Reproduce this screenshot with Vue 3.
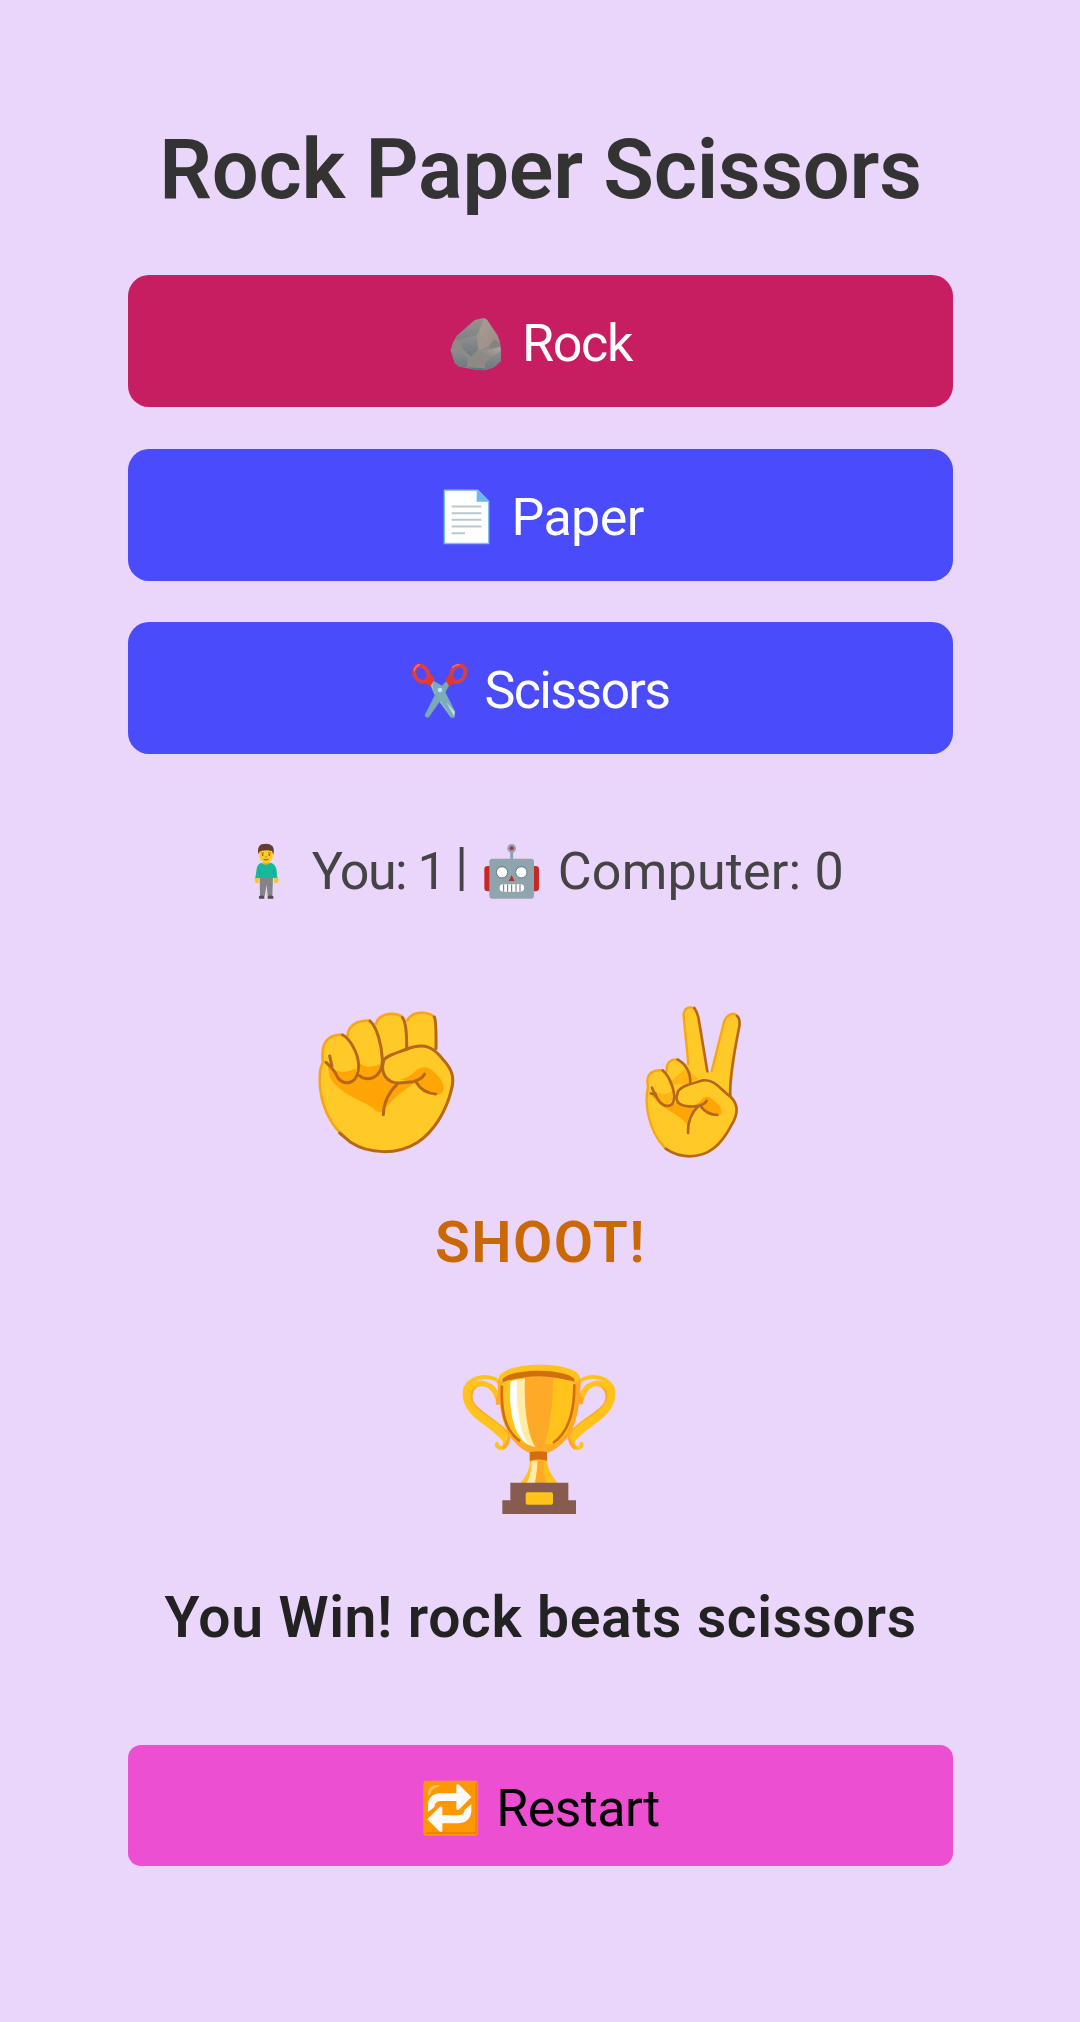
<script setup>
const restartLabel = 'Restart'
</script>

<template>
  <main class="game">
    <h1 class="title"><span>Rock Paper Scissors</span></h1>

    <div class="choices">
      <button class="choice selected">
        <svg class="rock-icon" viewBox="60 50 156 162" width="52" height="54" aria-hidden="true">
          <defs>
            <linearGradient id="rk1" x1="0" y1="0" x2="0" y2="1"><stop offset="0" stop-color="#9a918c" /><stop offset="1" stop-color="#7d8285" /></linearGradient>
            <linearGradient id="rk2" x1="0" y1="0" x2="1" y2="1"><stop offset="0" stop-color="#a89d96" /><stop offset="1" stop-color="#9b8c84" /></linearGradient>
            <linearGradient id="rk3" x1="0" y1="0" x2="0" y2="1"><stop offset="0" stop-color="#908e8c" /><stop offset="1" stop-color="#6c7a81" /></linearGradient>
            <linearGradient id="rk4" x1="1" y1="0" x2="0" y2="1"><stop offset="0" stop-color="#b2a59d" /><stop offset="1" stop-color="#80817f" /></linearGradient>
          </defs>
          <path d="M162 53 L170 57 L202 103 L210 125 L213 150 L212 182 L192 201 L164 210 L138 208 L88 199 L74 187 L62 150 L68 128 L80 107 L134 60Z" fill="#8e8b88" />
          <path d="M162 53 L149 88 L140 104 L90 119 L75 119 L84 104 L134 60Z" fill="url(#rk1)" />
          <path d="M163 54 L172 60 L204 110 L209 124 L192 118 L174 139 L166 132 L147 92Z" fill="url(#rk2)" />
          <path d="M148 92 L165 132 L174 139 L146 150 L139 122 L140 104Z" fill="#a0958e" />
          <path d="M90 117 L140 106 L145 145 L123 169 L97 144Z" fill="url(#rk3)" />
          <path d="M175 139 L193 118 L210 128 L207 139 L185 146Z" fill="#858382" />
          <path d="M147 151 L184 147 L210 139 L213 152 L182 172 L163 160Z" fill="url(#rk4)" />
          <path d="M182 172 L213 152 L212 183 L192 201 L165 209 L164 188Z" fill="url(#rk3)" />
          <path d="M62 147 L82 150 L114 174 L111 201 L88 199 L74 187Z" fill="url(#rk3)" />
          <path d="M123 170 L146 151 L181 172 L164 188 L163 209 L111 202 L114 174Z" fill="#8e8984" />
          <path d="M111 201 L163 204 L164 210 L137 208Z" fill="#607681" />
        </svg>
        <span class="rock-label">Rock</span>
      </button>

      <button class="choice">
        <svg class="paper-icon" viewBox="70 56 141 167" width="47" height="56" aria-hidden="true">
          <path d="M74 59 H174 L207 92 V219 H74Z" fill="#fff" stroke="#82bdf7" stroke-width="4" />
          <path d="M171 58 L209 94 H171Z" fill="#6cb7ed" />
          <path d="M96 108 H185 M96 128 H185 M96 148 H185 M96 168 H185 M96 188 H136" stroke="#bbc8cf" stroke-width="6" />
        </svg>
        <span class="paper-label">Paper</span>
      </button>

      <button class="choice">
        <svg class="scissors-icon" viewBox="36 66 168 171" width="56" height="57" aria-hidden="true">
          <path d="M96 119 L108 135 L120 147 L164 228 Q160 236 152 232 L105 167 L92 137Z" fill="#9bcbd9" stroke="#608998" stroke-width="2" />
          <path d="M145 117 L130 133 L112 150 L74 226 Q77 236 87 231 L127 174 L147 137Z" fill="#79a9ba" stroke="#608998" stroke-width="1" />
          <path d="M95 119 L126 137 L166 215 L163 233 L153 231 L101 153Z" fill="#80abbb" />
          <path d="M139 187 L164 216 L162 228Z" fill="#b9e6f1" />
          <ellipse cx="64" cy="101" rx="20" ry="26" transform="rotate(-30 64 101)" fill="none" stroke="#e33c3c" stroke-width="12" />
          <path d="M87 102 Q97 103 104 117 L91 139 Q80 135 76 126Z" fill="#e33b32" />
          <ellipse cx="175" cy="101" rx="20" ry="26" transform="rotate(30 175 101)" fill="none" stroke="#d3404d" stroke-width="12" />
          <path d="M153 102 Q143 103 136 120 L148 139 Q158 135 163 126Z" fill="#dc382f" />
          <path d="M43 92 Q45 79 58 74 M157 82 Q166 74 177 74" fill="none" stroke="#ff776c" stroke-width="4" stroke-linecap="round" />
          <circle cx="120" cy="150" r="7" fill="#bde7ed" />
        </svg>
        <span class="scissors-label">Scissors</span>
      </button>
    </div>

    <p class="score">
      <svg class="person-icon" viewBox="68 40 78 168" width="26" height="56" aria-hidden="true">
        <path d="M75 141 Q69 151 77 160 L85 160 L86 140Z M131 141 L132 160 L141 160 Q149 150 140 140Z" fill="#ffc51b" />
        <path d="M88 141 H128 L126 199 H112 L109 165 L103 199 H89Z" fill="#828487" />
        <path d="M86 200 Q93 195 102 200 V207 H86Z M112 200 Q121 195 129 200 V207 H112Z" fill="#504b50" />
        <path d="M98 91 H118 V108 H98Z" fill="#f5b311" />
        <path d="M93 99 Q107 111 121 99 Q136 102 139 123 L141 144 H131 L130 123 V145 H86 V123 L85 145 H75 L79 117 Q81 103 93 99Z" fill="#18b89b" />
        <path d="M130 119 V145 M86 119 V145" stroke="#079b83" stroke-width="2" />
        <ellipse cx="107" cy="75" rx="21" ry="25" fill="#ffca28" />
        <path d="M84 73 Q80 50 94 44 Q115 38 126 49 Q133 56 129 75 L125 64 Q107 59 89 65Z" fill="#653c32" />
        <path d="M92 70 H101 M113 70 H122" stroke="#744628" stroke-width="2" />
        <circle cx="97" cy="76" r="2.5" fill="#4b342c" /><circle cx="117" cy="76" r="2.5" fill="#4b342c" />
        <path d="M104 82 H110" stroke="#d58a0c" stroke-width="3" /><path d="M100 89 Q107 93 114 89" fill="none" stroke="#975322" stroke-width="3" />
      </svg>
      <span class="you-label">You: 1</span>
      <span class="divider">|</span>
      <svg class="robot-icon" viewBox="42 40 168 168" width="56" height="56" aria-hidden="true">
        <path d="M125 64 V90" stroke="#90a4ae" stroke-width="9" />
        <circle cx="125" cy="56" r="13" fill="#90a4ae" /><circle cx="125" cy="56" r="6" fill="#b52e37" />
        <rect x="43" y="109" width="25" height="76" rx="10" fill="#c62828" /><rect x="182" y="109" width="25" height="76" rx="10" fill="#c62828" />
        <rect x="58" y="87" width="134" height="120" rx="9" fill="#90a4ae" />
        <circle cx="96" cy="128" r="17" fill="#fff" stroke="#657780" stroke-width="3" /><circle cx="154" cy="128" r="17" fill="#fff" stroke="#657780" stroke-width="3" />
        <path d="M125 137 L134 154 H116Z" fill="#c62828" />
        <rect x="89" y="164" width="73" height="22" rx="10" fill="#fff" />
        <path d="M101 164 V186 M113 164 V186 M125 164 V186 M138 164 V186 M150 164 V186" stroke="#607076" stroke-width="3" />
      </svg>
      <span class="computer-label">Computer: 0</span>
    </p>

    <div class="hands">
      <svg viewBox="0 0 510 540" width="170" height="180" aria-hidden="true" fill="none" stroke-linecap="round" stroke-linejoin="round">
        <path d="M66 218 C61 160 82 134 126 134 L143 136 C144 107 172 90 210 92 L228 101 C235 72 276 62 309 80 L322 91 C334 63 380 61 402 80 L409 97 V185 C439 211 460 237 461 273 C455 349 419 405 367 450 C315 491 235 498 163 466 C90 413 49 327 61 238Z" fill="#ffca28" />
        <path d="M80 211 C90 232 107 246 114 264 C127 280 151 280 169 250 L183 263 Q215 275 244 250 Q260 281 299 281 L350 274 C315 300 283 317 250 364 Q240 369 229 364 C204 332 135 329 90 264Z" fill="#ffa505" />
        <path d="M300 269 Q328 264 353 237 Q380 223 402 246 Q435 276 431 298 Q426 318 408 313 L378 302 L352 276Z" fill="#ffa505" />
        <path d="M104 239 Q130 254 167 235 L169 254 Q143 290 114 262Z M178 219 Q205 241 239 222 L244 250 Q211 273 181 258Z" fill="#ffa505" />
        <path d="M125 433 C73 383 53 308 61 238 L69 216 C61 160 82 134 126 134 M143 136 C144 107 172 90 210 92 M228 101 C235 72 276 65 304 78 M322 91 C336 63 380 63 402 80" stroke="#f9a51a" stroke-width="8" />
        <path d="M128 135 C149 145 174 188 176 225 C177 284 132 289 114 264 C103 238 90 227 78 217 M89 198 L96 229 M210 93 C231 112 245 164 247 207 C249 268 197 276 179 257 M307 82 Q321 100 320 175 M403 81 Q409 91 408 176" stroke="#b7671a" stroke-width="9" />
        <path d="M249 217 C250 196 299 187 329 174 C376 159 401 173 427 206 C456 237 465 261 454 300 C438 365 400 427 351 458 C290 496 205 492 152 457 L119 429" stroke="#b7671a" stroke-width="9" />
        <path d="M250 216 C241 251 261 279 297 279 L340 275 Q364 269 374 252 M292 282 Q251 322 250 374 M348 276 Q368 310 407 312" stroke="#b7671a" stroke-width="9" />
      </svg>
      <svg viewBox="0 0 450 540" width="150" height="180" aria-hidden="true" fill="none" stroke-linecap="round" stroke-linejoin="round">
        <path d="M84 288 C75 256 95 238 125 241 L140 243 C138 218 151 206 173 209 L202 222 L187 76 C191 50 219 43 231 70 L264 246 L275 244 L314 88 C323 65 355 67 360 93 L331 313 C357 338 355 369 336 407 C307 467 276 499 211 499 C135 498 82 434 81 322Z" fill="#ffca28" />
        <path d="M95 309 Q116 327 125 343 Q143 353 160 335 L175 341 L222 348 L238 350 L207 379 L204 407 C175 367 133 363 97 320Z" fill="#ffa505" />
        <path d="M211 348 Q234 345 250 323 Q267 314 282 333 Q310 349 304 372 Q296 381 277 373 L245 351Z" fill="#ffa505" />
        <path d="M111 307 Q135 320 157 302 L158 330 Q139 355 119 337Z M143 281 Q158 288 175 281 Q207 286 216 279 Q208 246 204 230Z M207 240 Q222 258 236 266 L212 276Z" fill="#ffa505" opacity=".6" />
        <path d="M134 473 C83 420 73 336 84 291 C76 256 92 239 127 241 M140 243 C138 218 153 205 176 209 M205 222 L191 77 C191 52 209 49 223 55 M275 243 L313 92 C324 69 342 67 351 77" stroke="#f9a51a" stroke-width="7" />
        <path d="M128 241 C151 261 174 320 156 343 C131 359 113 332 106 310 Q100 315 93 310 M96 293 L107 319 M173 209 Q212 231 211 281 M223 54 Q233 68 236 87 L262 244 M351 78 Q361 85 358 109 C346 173 327 258 331 318" stroke="#b7671a" stroke-width="8" />
        <path d="M172 314 C172 289 213 282 249 271 C284 267 299 296 332 321 C359 347 353 376 334 406 C304 463 267 499 208 499 Q168 498 137 476" stroke="#b7671a" stroke-width="8" />
        <path d="M170 317 Q165 346 207 349 Q249 352 260 333 M235 349 Q202 379 204 429 M242 349 Q261 374 292 375" stroke="#b7671a" stroke-width="8" />
      </svg>
    </div>

    <div class="shoot"><span>SHOOT!</span></div>

    <svg class="trophy" viewBox="0 0 540 540" width="180" height="180" aria-hidden="true" fill="none">
      <path d="M153 103 C135 74 70 70 46 113 C37 151 57 183 91 209 C133 239 158 258 166 275 Q165 296 151 294 Q139 290 141 282" stroke="#ffc31c" stroke-width="12" stroke-linecap="round" />
      <path d="M146 162 C139 125 122 98 91 103 C61 110 55 145 71 165 C88 190 157 226 177 256 Q174 288 158 294" stroke="#ffa928" stroke-width="11" />
      <path d="M142 141 C130 98 83 89 61 113 C42 140 56 166 87 191 C125 219 162 237 169 264" stroke="#ffc31c" stroke-width="16" />
      <path d="M381 103 C399 74 464 70 488 113 C497 151 477 183 443 209 C401 239 376 258 368 275 Q369 296 383 294 Q397 292 394 282" stroke="#ffc31c" stroke-width="12" stroke-linecap="round" />
      <path d="M392 162 C399 125 417 100 443 103 C473 110 478 145 464 165 C446 190 376 226 357 256 Q362 288 376 294" stroke="#ffa928" stroke-width="11" />
      <path d="M395 141 C406 98 451 89 474 113 C491 140 478 166 447 191 C409 219 372 237 365 264" stroke="#ffc31c" stroke-width="16" />
      <path d="M142 92 Q157 102 156 163 L139 165 Q133 154 145 131Z M391 92 Q376 102 379 163 L399 163 Q402 145 391 131Z" fill="#ffa928" />
      <path d="M145 91 C145 211 174 280 239 309 H292 C359 283 391 218 391 91 C380 31 155 31 145 91Z" fill="#ffa928" />
      <path d="M145 85 C156 31 380 31 390 82 L382 96 Q272 55 153 97Z" fill="#ffc31c" />
      <path d="M157 88 C182 54 347 53 374 88 L371 97 Q269 60 158 97Z" fill="#d16e0e" />
      <path d="M155 104 Q159 97 175 91 Q271 73 364 92 Q378 95 377 115 C376 204 352 270 311 283 H229 C176 264 149 205 155 104Z" fill="#ffc31c" />
      <path d="M156 107 C152 191 167 242 210 274 M373 103 C374 194 352 250 309 279" stroke="#d16e0e" stroke-width="8" />
      <path d="M181 95 Q194 87 225 86 C222 202 239 273 258 291 C201 284 172 197 181 95Z" fill="#ffecaa" />
      <path d="M182 96 Q191 91 201 91 C197 205 220 270 240 287 C199 267 176 202 182 96Z" fill="#fff" />
      <path d="M225 84 Q267 79 310 84 C307 186 297 257 278 292 H257 C234 252 221 176 225 84Z" fill="#ffa928" />
      <path d="M239 307 Q265 300 291 307 V334 H239Z" fill="#d16e0e" />
      <path d="M241 332 Q265 325 290 332 Q295 367 324 400 H211 Q240 365 241 332Z" fill="#ffc31c" />
      <path d="M245 334 H264 L255 400 H230 Q245 371 245 334Z" fill="#ffecaa" />
      <path d="M262 331 H280 Q281 369 290 400 H255 Q264 362 262 331Z" fill="#ffa928" />
      <path d="M181 398 H355 V451 H378 V492 H157 V451 H181Z" fill="#875b4f" />
      <rect x="227" y="427" width="82" height="37" rx="6" fill="#ffc31c" />
    </svg>

    <div class="result"><span>You Win! rock beats scissors</span></div>

    <button class="restart">
      <svg class="repeat-icon" viewBox="69 61 167 169" width="55.7" height="56.3" aria-hidden="true">
        <rect x="70" y="63" width="164" height="165" rx="9" fill="#ff9800" />
        <path d="M229 69 V220 H78" fill="none" stroke="#f28100" stroke-width="6" />
        <path d="M85 110 Q79 79 111 75 Q126 76 112 83 Q94 88 91 103Z" fill="#ffbd63" />
        <path d="M84 157 V139 Q84 103 121 101 H169 V78 Q170 70 179 77 L214 112 L178 149 Q170 155 169 145 V124 H123 Q105 124 103 142Z" fill="#fafafa" />
        <path d="M214 134 V155 Q211 190 174 191 H127 V214 Q125 220 118 215 L82 179 L119 142 Q127 136 127 146 V167 H175 Q193 165 194 150Z" fill="#fafafa" />
      </svg>
      <span class="restart-label">{{ restartLabel }}</span>
    </button>
  </main>
</template>

<style>
body {
  margin: 0;
  background: #e9d6fa;
}
</style>

<style scoped>
.game {
  box-sizing: border-box;
  width: 1080px;
  height: 2022px;
  padding: 119px 127px 0 128px;
  display: flex;
  flex-direction: column;
  background: #e9d6fa;
  font-family: Roboto, "Noto Sans", sans-serif;
  font-size: 52px;
  white-space: nowrap;
}
.title, .shoot, .result {
  display: flex;
  justify-content: center;
  margin: 0;
  font-weight: 600;
}
.title {
  height: 101px;
  line-height: 101px;
  font-size: 83px;
  letter-spacing: -0.25px;
  color: #333;
}
.choices {
  display: flex;
  flex-direction: column;
  gap: 41.5px;
  margin-top: 55px;
}
button {
  display: flex;
  align-items: center;
  box-sizing: border-box;
  width: 825px;
  padding: 5px 0 0;
  border: 0;
  font: inherit;
  flex: none;
}
svg {
  flex: none;
  display: block;
}
.choice {
  height: 132px;
  border-radius: 21px;
  background: #4a4bfa;
  color: #fff;
}
.choice.selected {
  background: #c71e62;
}
.rock-icon { margin: 0 20px 0 322px; }
.rock-label { letter-spacing: -1.3px; }
.paper-icon { margin: 0 21.5px 0 315px; }
.paper-label { letter-spacing: -0.6px; }
.scissors-icon { margin: 0 16.5px 0 284px; }
.scissors-label { letter-spacing: -1.7px; }
.score {
  display: flex;
  align-items: center;
  height: 80px;
  margin: 74px 0 0;
  color: #444;
}
.score span {
  padding-top: 6px;
}
.person-icon { margin: 6px 33px 0 124.7px; }
.you-label { width: 143.5px; letter-spacing: -1.5px; }
.score .divider {
  width: 12.6px;
  padding-top: 0;
  margin-top: -4px;
}
.robot-icon { margin: 6px 18px 0 16px; }
.computer-label { letter-spacing: 0.2px; }
.hands {
  display: flex;
  gap: 150px;
  margin: 82px 0 0 172px;
}
.shoot {
  height: 80px;
  margin-top: 33px;
  line-height: 80px;
  font-size: 57px;
  letter-spacing: 1.4px;
  color: #cb6806;
}
.trophy { margin: 67px 0 0 322px; }
.result {
  height: 80px;
  margin-top: 48px;
  line-height: 80px;
  font-size: 57px;
  letter-spacing: 0.65px;
  color: #222;
}
.restart {
  height: 121px;
  margin-top: 87px;
  border-radius: 13px;
  background: #ed4fd3;
  color: #000;
}
.repeat-icon { margin: 0 17.5px 0 295px; }
.restart-label { letter-spacing: -0.6px; }
</style>
